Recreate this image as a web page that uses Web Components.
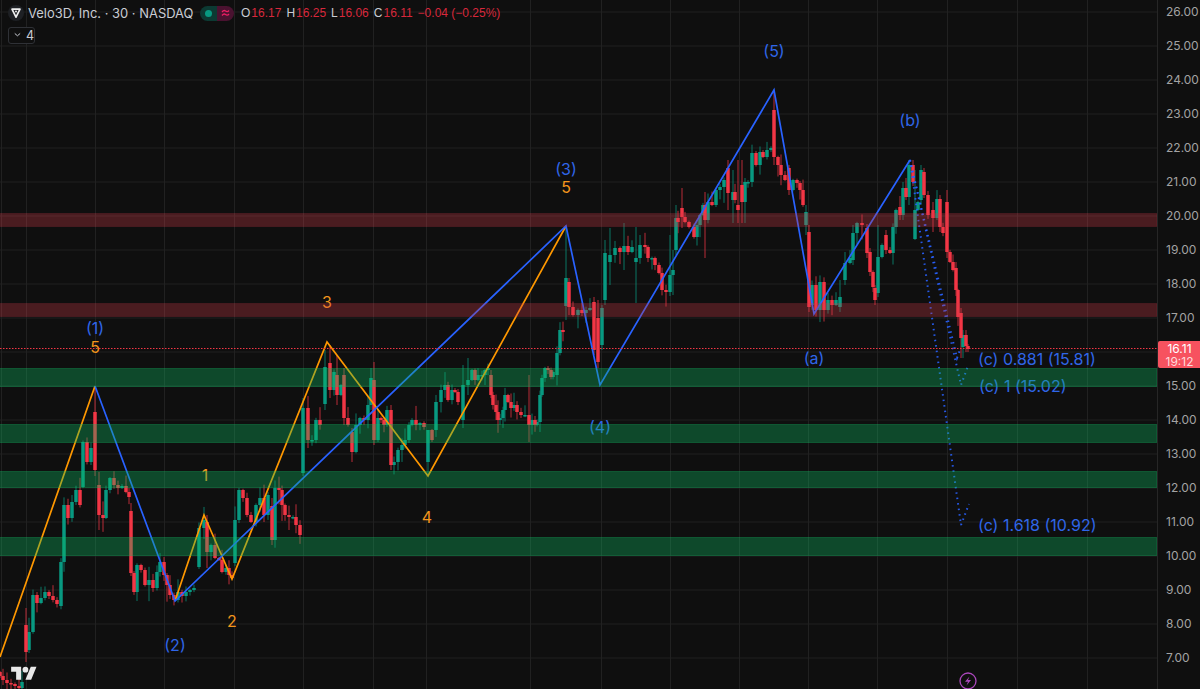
<!DOCTYPE html>
<html><head><meta charset="utf-8"><title>Velo3D chart</title>
<style>html,body{margin:0;padding:0;background:#0f0f0f;overflow:hidden}</style></head>
<body>
<tv-chart>
  <tv-legend slot="legend"></tv-legend>
  <tv-pane slot="pane">
    <tv-label x="95" y="328" c="b">(1)</tv-label><tv-label x="95" y="347" c="o">5</tv-label>
    <tv-label x="327" y="302" c="o">3</tv-label><tv-label x="205" y="475" c="o">1</tv-label>
    <tv-label x="232" y="621" c="o">2</tv-label><tv-label x="427" y="517" c="o">4</tv-label>
    <tv-label x="175" y="645" c="b">(2)</tv-label><tv-label x="566" y="169" c="b">(3)</tv-label>
    <tv-label x="566" y="187" c="o">5</tv-label><tv-label x="600" y="427" c="b">(4)</tv-label>
    <tv-label x="774" y="51" c="b">(5)</tv-label><tv-label x="814" y="358" c="b">(a)</tv-label>
    <tv-label x="910" y="120" c="b">(b)</tv-label>
    <tv-label left x="978" y="359" c="b">(c) 0.881 (15.81)</tv-label>
    <tv-label left x="979" y="386" c="b">(c) 1 (15.02)</tv-label>
    <tv-label left x="978" y="525" c="b">(c) 1.618 (10.92)</tv-label>
  </tv-pane>
  <tv-price-axis slot="axis" price="16.11" time="19:12"></tv-price-axis>
</tv-chart>
<script>
const FONT='Inter,"Liberation Sans",sans-serif';
class TvChart extends HTMLElement{constructor(){super();this.attachShadow({mode:'open'}).innerHTML=`<style>
:host{display:flex;width:1200px;height:689px;background:#0f0f0f;overflow:hidden;font-family:${FONT};position:relative}
.pane{flex:1;position:relative;min-width:0}
</style><div class="pane"><slot name="pane"></slot><slot name="legend"></slot></div><slot name="axis"></slot>`}}
class TvLegend extends HTMLElement{constructor(){super();this.attachShadow({mode:'open'}).innerHTML=`<style>
:host{position:absolute;left:8px;top:4px;display:flex;flex-direction:column;gap:4px;font:12.5px ${FONT};color:#d1d4dc;z-index:5}
.row{display:flex;align-items:center;height:18px}
.ico{width:16px;height:16px;border-radius:50%;background:#1e2024;display:flex;align-items:center;justify-content:center;margin-right:4px}
.t{font-size:12.95px;color:#c9ccd3;white-space:nowrap;width:165px}
.pill{display:flex;height:15px;margin:0 7px;border-radius:8px;overflow:hidden;width:34px}
.pill i{flex:1;display:flex;align-items:center;justify-content:center;font-style:normal}
.g{background:#0c3a33}.g b{width:7px;height:7px;border-radius:50%;background:#089981}
.p{background:#4a1230;color:#e91e63}
.o{display:flex;gap:1px;margin-right:5px;white-space:nowrap;font:12px "Liberation Sans",Arial,sans-serif}.o span{color:#c9ccd3}.o em{font-style:normal;color:#d8283c}
.btn{display:flex;align-items:center;gap:5px;width:27px;height:17px;box-sizing:border-box;border:1px solid #2f3136;border-radius:3px;padding-left:5px;font-size:12.5px;color:#c9ccd3;background:#0f0f0f}
</style>
<div class="row"><div class="ico"><svg width="10" height="10" viewBox="0 0 10 10"><path d="M1 1.200h8L5 9.200Z" fill="none" stroke="#eee" stroke-width="1.700" stroke-linejoin="round"/><circle cx="5" cy="3.600" r="1" fill="#eee"/></svg></div>
<div class="t">Velo3D, Inc. · 30 · NASDAQ</div>
<div class="pill"><i class="g"><b></b></i><i class="p"><svg width="9" height="8" viewBox="0 0 9 8" fill="none" stroke="#e91e63" stroke-width="1.300"><path d="M1 3c1.500-1.800 2.500-1.800 3.500-1S6.800 3 8 1.500M1 6.500c1.500-1.800 2.500-1.800 3.500-1S6.800 6.500 8 5"/></svg></i></div>
<div class="o"><span>O</span><em>16.17</em></div><div class="o"><span>H</span><em>16.25</em></div><div class="o"><span>L</span><em>16.06</em></div><div class="o"><span>C</span><em>16.11</em></div><div class="o"><em>−0.04 (−0.25%)</em></div></div>
<div class="row"><div class="btn"><svg width="9" height="6" viewBox="0 0 9 6" fill="none" stroke="#c9ccd3" stroke-width="1.300"><path d="M1 1l3.500 3L8 1"/></svg><span>4</span></div></div>`}}
class TvLabel extends HTMLElement{connectedCallback(){if(this.shadowRoot)return;const x=+this.getAttribute('x'),y=+this.getAttribute('y');const col=this.getAttribute('c')=='b'?'#2f66e8':'#f2951c';
this.attachShadow({mode:'open'}).innerHTML=`<style>:host{position:absolute;left:${x}px;top:${y}px;transform:translate(${this.hasAttribute('left')?'0':'-50%'},-50%);font:16px ${FONT};color:${col};white-space:nowrap;line-height:1;z-index:2}</style><slot></slot>`}}
/* candles: [x, close, open, high, low]; open defaults to previous close */
const D=[[0,676,672],[3,680],[7,683],[11,684],[15,686],[19,688],[22,682],[26,652,625,608,662],[29,632,650],[33,595],[37,603],[41,598],[45,592],[49,596],[53,600],[57,604],[61,562,606],[64,505],[68,518],[72,502],[76,490],[80,505],[83,442,487],[87,462],[91,448],[95,470,412,386,476],[99,515,485,472,530],[103,518],[106,490],[110,478],[114,485],[118,488],[122,486],[126,492],[129,497],[131,573,511,503,576],[134,592],[137,565],[141,570],[145,585],[149,580],[153,588],[157,572],[160,562],[164,575],[167,585],[170,595],[174,600],[178,592],[182,596],[186,592],[190,590],[194,588],[199,528,567],[204,520],[207,552,522,515,568],[211,545],[215,558],[219,560],[222,572],[226,568],[229,575],[232,578],[235,520,563],[239,490],[243,498],[247,515],[251,522],[256,505],[260,498],[264,515],[268,495],[272,540,506,498,545],[275,488],[279,490],[282,505],[285,515],[289,517],[293,517],[296,525],[300,535],[303,408,473,398,476],[308,440,408,396,448],[312,440],[316,420],[320,425],[325,367,404,350,410],[330,390,363,345,398],[334,372],[337,395,375,355,405],[341,385],[344,418,375,368,425],[348,425],[352,452,432,428,462],[356,425],[360,418],[364,420],[368,405],[371,378,405,368,410],[374,440,380,362,445],[378,418],[381,420],[384,425],[387,410],[391,465,410,405,470],[394,462],[398,450],[402,445],[405,440],[409,425],[412,420],[416,425],[420,423],[424,427],[428,430,462,430,475],[432,440],[436,402,430],[441,390],[445,385],[448,400],[452,390],[455,392],[458,402],[463,385,420,365,428],[468,380,385,358,395],[472,370],[475,380],[478,375],[482,375],[485,370],[488,368],[491,395,375,370,398],[493,405],[496,412],[498,420],[500,418],[503,410],[505,395],[508,402],[511,408],[514,405],[517,412],[521,415],[525,415],[529,425,415,375,442],[532,420],[535,425],[537,422],[540,395],[542,378],[545,368],[548,370],[551,377],[553,372],[557,353,375],[560,330],[563,332],[566,278,306,226,320],[569,307,282,278,315],[573,315],[578,310],[582,313],[586,310],[590,308],[594,350,302,297,355],[598,362,318,300,368],[602,308,345,305,350],[605,253,300,240,305],[610,255,262,228,285],[615,248],[620,252],[624,246,252,223,270],[628,252],[632,247],[636,258,262,227,303],[640,245],[645,247],[648,258],[652,258],[655,265],[659,273],[662,290],[666,292],[670,275,292,235,296],[673,270,275,250,295],[676,218,250,205,255],[678,222],[682,217,208,188,228],[685,222],[689,227],[694,237],[697,225],[700,215],[703,205],[705,220,205,192,258],[708,202],[712,205],[716,190],[720,187],[724,180],[728,193,168,160,210],[733,192,200,170,223],[735,200],[738,210,205,160,223],[742,202,185,160,223],[745,182,202,178,223],[748,182],[752,153],[756,165],[760,152],[763,157],[767,150],[771,148],[774,157,110,90,165],[778,165],[781,175],[785,180],[789,190,168,165,195],[793,180],[797,183],[800,190],[803,205],[806,212,225,205,235],[809,307,232,225,312],[812,285,305],[816,310],[820,282],[824,310],[828,300],[832,305],[836,300],[840,297,307,280,312],[845,263,280,252,285],[850,258],[853,233,260,225,265],[857,223],[862,225],[867,253,228,224,258],[870,272,252,248,276],[873,287],[875,300,288,285,305],[878,257,293,225,297],[882,245],[886,250,235,230,254],[890,253],[893,227],[896,210],[900,215,207,196,220],[903,188,215,182,220],[906,197,188,178,200],[909,165,197,160,205],[913,182,165,160,186],[915,210,239,170,240],[918,202],[921,170,200,165,205],[924,195,172,168,198],[928,215],[933,218,210,202,232],[937,199],[940,227,199,195,232],[943,233],[947,252,202,190,258],[950,262],[953,270],[956,290,268,262,296],[958,317],[961,338,313,308,358],[963,335,347,330,358],[966,346,335,330,352],[968,349,346,344,352]];
let seed=7;const rnd=()=>(seed=(seed*16807)%2147483647)/2147483647;
function candles(){let up='',dn='',wu='',wd='',prev=676;
for(const e of D){const x=e[0],c=e[1],o=e[2]??prev;const t=Math.min(o,c),b=Math.max(o,c);const h=e[3]??(t-1-rnd()*rnd()*16),l=e[4]??(b+1+rnd()*rnd()*16);
const isUp=c<=o;const body=`M${x-1.75} ${t}h3.500v${Math.max(b-t,1.5)}h-3.500z`,w=`M${x} ${h}V${l}`;
if(isUp){up+=body;wu+=w}else{dn+=body;wd+=w}prev=c}
return `<path d="${wu}" stroke="#089981" stroke-opacity=".75" fill="none"/><path d="${wd}" stroke="#f23645" stroke-opacity=".75" fill="none"/><path d="${up}" fill="#089981"/><path d="${dn}" fill="#f23645"/>`}
class TvPane extends HTMLElement{constructor(){super();let g='';for(let i=0;i<20;i++){g+=`M0 ${12.5+34*i-.5}H1157`}
for(const x of [1,26,95,164,234,303,373,426,530,601,670,739,808,877,947,1017,1087])g+=`M${x}.5 0V689`;
const zone=(y,h,f,s)=>`<rect x="-2" y="${y}.5" width="1159" height="${h}" fill="${f}" stroke="${s}"/>`;
const R='rgba(212,58,72,.3)',RS='rgba(212,58,72,.16)',G='rgba(15,190,101,.337)',GS='rgba(20,190,100,.3)';
this.attachShadow({mode:'open'}).innerHTML=`<style>:host{position:absolute;inset:0;display:block;overflow:hidden}
svg{position:absolute;left:0;top:0}.top{z-index:3;pointer-events:none}.logo{position:absolute;left:11px;top:664px;z-index:4}.bolt{position:absolute;left:959px;top:672px;z-index:4}</style>
<svg width="1157" height="689"><path d="${g}" stroke="#212121" fill="none"/>${candles()}
<path d="M0 657L95 386M175 601L204 515L232 579L327 342L428 476L566 226" fill="none" stroke="#ff9800" stroke-width="1.700"/>
<path d="M95 386L175 601L566 226L600 385L774 90L814 314L910 160" fill="none" stroke="#2962ff" stroke-width="1.700" stroke-linejoin="miter"/>
<g fill="none" stroke="#2962ff" stroke-width="2" stroke-opacity=".9" stroke-dasharray="1.500 4"><path d="M910 160L961 525L969 504"/><path d="M910 160L961 385L968 366"/><path d="M910 160L957 358L960 350"/></g>
<path d="M0 348.500H1157" stroke="#f23645" stroke-dasharray="1.500 1.500"/></svg>
<slot></slot>
<svg class="top" width="1157" height="689">${zone(213,13,R,RS)}${zone(303,13,R,RS)}${zone(368,18,G,GS)}${zone(424,18,G,GS)}${zone(471,16,G,GS)}${zone(537,18,G,GS)}</svg>
<svg class="logo" width="26" height="20" viewBox="0 0 36 28"><path d="M14 22H7V11H0V4h14v18ZM28 22h-8l7.500-18h8L28 22Z" fill="#e8e8e8"/><circle cx="20" cy="8" r="4" fill="#e8e8e8"/></svg>
<svg class="bolt" width="18" height="18" viewBox="0 0 18 18"><circle cx="9" cy="9" r="8" fill="#0f0f0f" stroke="#ab47bc" stroke-width="1.300"/><path d="M10.500 4.500L6 9.800h3l-1.500 3.700L12 8H9Z" fill="#ab47bc"/></svg>`}}
class TvPriceAxis extends HTMLElement{constructor(){super();this.attachShadow({mode:'open'})}connectedCallback(){let r='';for(let p=26;p>=7;p--)r+=`<div class="r">${p==16?'':p.toFixed(2)}</div>`;
this.shadowRoot.innerHTML=`<style>:host{display:block;width:43px;box-sizing:border-box;border-left:1px solid #262626;position:relative;font:12px ${FONT};color:#a3a3a3;background:#0f0f0f;overflow:hidden}
.list{margin-top:-5px;padding-left:8px}.r{height:34px;line-height:34px}
.tag{position:absolute;left:0;top:341px;width:43px;height:27px;background:#f7525f;color:#fff;border-radius:2px 0 0 2px;display:flex;flex-direction:column;align-items:center;justify-content:center;font-size:12px;line-height:13px}
.tag span:last-child{color:#ffd9dc}</style><div class="list">${r}</div><div class="tag"><span>${this.getAttribute('price')}</span><span>${this.getAttribute('time')}</span></div>`}}
customElements.define('tv-chart',TvChart);customElements.define('tv-legend',TvLegend);customElements.define('tv-label',TvLabel);customElements.define('tv-pane',TvPane);customElements.define('tv-price-axis',TvPriceAxis);
</script>
</body></html>
